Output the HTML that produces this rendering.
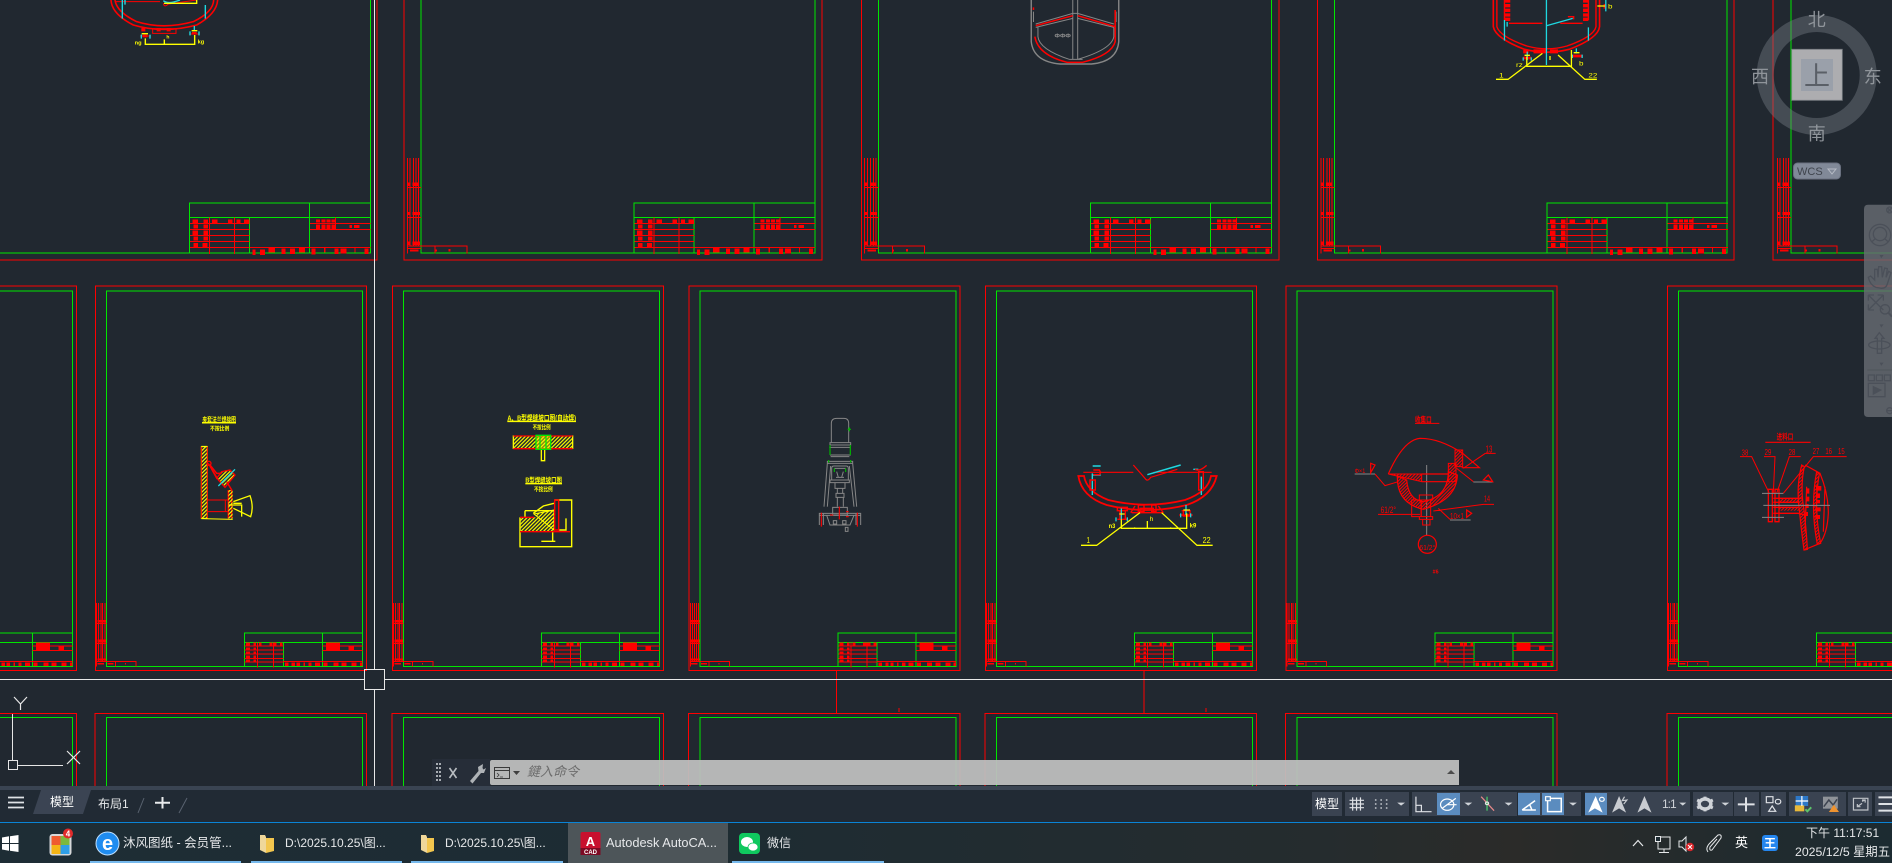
<!DOCTYPE html>
<html lang="zh"><head><meta charset="utf-8"><title>AutoCAD</title>
<style>
html,body{margin:0;padding:0;width:1892px;height:863px;overflow:hidden;background:#212830;}
body{position:relative;font-family:"Liberation Sans","Noto Sans CJK SC",sans-serif;}
svg{position:absolute;left:0;top:0;display:block;}
path,rect,line,circle,ellipse,polyline,polygon{vector-effect:non-scaling-stroke;}
.t{position:absolute;white-space:nowrap;color:#e6e8ea;font-size:12px;line-height:16px;}
.bar{position:absolute;background:#3a4351;}
.hi{position:absolute;background:#5b8cbf;}
.ul{position:absolute;top:861px;height:2px;background:#76b9ed;}
.r{stroke:#f00;fill:none}.g{stroke:#00e600;fill:none}.y{stroke:#ff0;fill:none}.c{stroke:#1fd8e0;fill:none}.w{stroke:#868686;fill:none}
.fr{fill:#f00;stroke:none}
text{font-family:"Liberation Sans","Noto Sans CJK SC",sans-serif;}
</style></head><body>

<svg width="1892" height="786" viewBox="0 0 1892 786">
<defs>
<pattern id="hy" width="8" height="8" patternUnits="userSpaceOnUse" patternTransform="rotate(45)"><rect x="0" y="0" width="3.5" height="8" fill="#ff0" style="vector-effect:none"/></pattern>
<pattern id="hr" width="7" height="7" patternUnits="userSpaceOnUse" patternTransform="rotate(45)"><rect x="0" y="0" width="3" height="7" fill="#f00" style="vector-effect:none"/></pattern>

<g id="r1t" transform="scale(.33333)" shape-rendering="crispEdges">
 <path class="g" d="M568 760V609H1112M568 652H1112M928 609V760M748 652V760"/>
 <path class="r" d="M570 670H748M570 688H748M570 706H748M570 724H748M570 742H748M628 652V762M703 652V762M930 670H1112M930 688H1112M1007 652V688M750 742H1112"/>
 <path class="fr" d="M578 658h16v14h-16zM610 658h14v14h-14zM636 658h16v14h-16zM684 658h14v14h-14zM710 658h12v14h-12zM732 658h16v14h-16zM580 673h14v12h-14zM610 673h14v12h-14zM578 692h16v14h-16zM610 692h14v14h-14zM580 710h14v12h-14zM610 710h14v12h-14zM580 729h14v13h-14zM608 729h14v13h-14zM948 658h12v10h-12zM964 658h12v10h-12zM980 658h12v10h-12zM995 658h12v10h-12zM948 674h12v13h-12zM964 674h12v13h-12zM980 674h12v13h-12zM995 674h12v13h-12zM1048 675h8v9h-8zM1062 675h16v9h-16zM757 748h10v17h-10zM780 748h15v17h-15zM805 743h20v15h-20zM845 745h12v17h-12zM870 745h15v17h-15zM897 743h18v15h-18zM935 745h12v18h-12zM972 743h5v15h-5zM1003 745h12v17h-12zM1022 745h18v15h-18zM1063 743h4v15h-4zM1093 745h12v17h-12z"/>
</g>

<g id="r1s" transform="scale(.33333)" shape-rendering="crispEdges">
 <path class="r" d="M-111.5 474V738M-103.5 474V738M-93.5 474V738M-85.5 474V738M-77.5 474V738M-111.5 563H-70M-111.5 652H-70"/>
 <path class="fr" d="M-111 548h8v10h-8zM-96 548h18v10h-18zM-111 636h8v9h-8zM-96 636h22v9h-22zM-111 724h8v11h-8zM-96 724h22v11h-22zM-103 748h25v6h-25zM-28 748h5v6h-5zM12 747h6v8h-6z"/>
 <path class="r" d="M-111.5 760V738H68V760M-28.5 738V760M-111.5 745H-70"/>
</g>

<g id="r2" transform="translate(90,610) scale(.33333)" shape-rendering="crispEdges">
 <rect class="r" x="16" y="-972" width="813" height="1153"/>
 <rect class="g" x="49" y="-957" width="768" height="1126"/>
 <path class="g" d="M463 169V69H817M463 97H817M697 69V169M580 97V169"/>
 <path class="r" d="M464 108H580M464 120H580M464 132H580M464 145H580M464 156H580M502 97V172M550 97V172M697 108H817M697 121H817M580 155H817"/>
 <path class="fr" d="M468 97h12v11h-12zM490 97h8v11h-8zM507 97h8v11h-8zM538 97h10v11h-10zM552 97h8v11h-8zM570 97h8v11h-8zM468 112h12v8h-12zM490 112h8v8h-8zM468 124h12v8h-12zM490 124h8v8h-8zM468 136h12v8h-12zM490 136h8v8h-8zM468 148h12v8h-12zM490 148h8v8h-8zM708 97h42v24h-42zM775 110h17v10h-17zM585 157h10v11h-10zM605 157h10v11h-10zM620 157h10v11h-10zM640 157h5v11h-5zM655 157h10v11h-10zM675 157h15v11h-15zM700 157h12v11h-12zM730 157h15v11h-15zM755 157h15v11h-15zM785 157h15v11h-15zM810 157h7v11h-7z"/>
 <path class="r" d="M20 -21V154M26 -21V154M33 -21V154M38 -21V154M45 -21V154M20 40H49M20 100H49M20 154H138V170M20 154V170M76 154V170"/>
 <path class="fr" d="M22 30h10v8h-10zM34 30h14v8h-14zM22 88h10v9h-10zM34 88h14v9h-14zM22 145h10v7h-10zM34 145h14v7h-14zM22 159h20v5h-20zM52 159h18v5h-18zM105 159h3v5h-3z"/>
</g>

<g id="r3" shape-rendering="crispEdges">
 <path class="r" d="M95 786V713.3H366.5V786"/>
 <path class="g" d="M106.3 786V717.3H362.3V786"/>
</g>
</defs>

<rect width="1892" height="786" fill="#212830"/>

<!-- row 1 frames -->
<g shape-rendering="crispEdges">
 <path class="r" d="M377 0V260H0"/><path class="g" d="M370.5 0V253H0"/>
 <path class="r" d="M404 0V260H822V0"/><path class="g" d="M421 0V253H815V0"/>
 <path class="r" d="M861.5 0V260H1279V0"/><path class="g" d="M878.4 0V253H1271.5V0"/>
 <path class="r" d="M1317.5 0V260H1734V0"/><path class="g" d="M1334.5 0V253H1727V0"/>
 <path class="r" d="M1773 0V260H1892"/><path class="g" d="M1791 0V253H1892"/>
</g>
<use href="#r1t"/>
<use href="#r1t" transform="translate(444.5,0)"/>
<use href="#r1t" transform="translate(901,0)"/>
<use href="#r1t" transform="translate(1357.5,0)"/>
<use href="#r1s" transform="translate(444.5,0)"/>
<use href="#r1s" transform="translate(901.9,0)"/>
<use href="#r1s" transform="translate(1358,0)"/>
<use href="#r1s" transform="translate(1814.5,0)"/>
<!-- row 2 frames -->
<use href="#r2" transform="translate(-290,0)"/>
<use href="#r2"/>
<use href="#r2" transform="translate(297,0)"/>
<use href="#r2" transform="translate(593.7,0)"/>
<use href="#r2" transform="translate(890,0)"/>
<use href="#r2" transform="translate(1190.5,0)"/>
<use href="#r2" transform="translate(1572,0)"/>
<!-- row 3 frames -->
<use href="#r3" transform="translate(-290,0)"/>
<use href="#r3"/>
<use href="#r3" transform="translate(297,0)"/>
<use href="#r3" transform="translate(593.7,0)"/>
<use href="#r3" transform="translate(890,0)"/>
<use href="#r3" transform="translate(1190.5,0)"/>
<use href="#r3" transform="translate(1572,0)"/>
<!-- between rows small marks -->
<path class="r" d="M836.5 670V713M1144 670V713M899 708v4M1206 708v4"/>

<!-- top drawing frame 1 -->
<g transform="scale(.33333)">
 <path class="r" stroke-width="1.6" d="M333 0Q335 42 400 75Q490 102 590 75Q650 42 653 0"/>
 <path class="r" stroke-width="1.6" d="M345 0Q350 36 410 65Q490 90 580 65Q640 36 641 0"/>
 <path class="r" d="M345 5H480M490 10Q492 24 505 12L590 0M458 86H528V100H458ZM420 108H452M570 102H598"/>
 <path class="fr" d="M424 84h12v10h-12zM470 84h12v10h-12zM500 84h12v10h-12zM428 104h14v8h-14zM576 96h14v8h-14z"/>
 <path class="c" stroke-width="1.4" d="M367 0V56M616 15V56M375 0V14M490 2Q505 14 540 0M424 104v12M450 104v12M570 94v12M597 94v12M583 78V90"/>
 <path class="y" stroke-width="1.4" d="M436 115V133H584V105M493 118V133M425 101H444M575 92H592M492 10H590V0"/>
 <text x="404" y="134" font-size="17" font-weight="bold" fill="#ff0">ng</text><text x="593" y="131" font-size="17" font-weight="bold" fill="#ff0">kg</text><text x="499" y="116" font-size="15" font-weight="bold" fill="#ff0">h</text>
</g>

<!-- top drawing frame 3 (grey) -->
<g transform="translate(1000,0) scale(.44643,.33333)">
 <path class="w" stroke-width="1.4" d="M70 0V125Q75 185 135 192H205Q262 185 266 125V0"/>
 <path class="w" stroke-width="1" d="M75 35V66M260 35V66M80 72L163 40H174L255 72M80 82L163 55M174 55L255 82M163 0V178M174 0V178M85 82V110Q88 148 155 178M255 82V110Q250 148 174 178M155 178H185"/>
 <path class="r" stroke-width="1.5" d="M80 77L163 47M174 47L258 80M75 22V30M258 30V125Q250 165 185 187H150Q85 165 78 110"/>
 <text x="122" y="113" font-size="15" fill="#8e8e8e" font-weight="bold">ΦΦΦ</text>
</g>

<!-- top drawing frame 4 -->
<g transform="translate(1000,0) scale(.44643,.33333)">
 <path class="r" stroke-width="1.6" d="M1105 0V80Q1110 115 1175 148Q1225 165 1275 148Q1340 115 1343 80V0"/>
 <path class="r" stroke-width="1.4" d="M1113 0V80Q1120 110 1180 138Q1225 155 1270 138Q1330 110 1335 80V0M1140 70H1215M1255 70H1305M1272 50H1285V58M1130 0V60M1318 60V0"/>
 <path class="fr" d="M1131 0h12v8h-12zM1131 12h12v10h-12zM1131 26h12v10h-12zM1131 40h12v10h-12zM1131 53h12v10h-12zM1306 0h12v8h-12zM1306 12h12v10h-12zM1306 26h12v10h-12zM1306 40h12v10h-12zM1306 53h12v10h-12zM1172 150h12v10h-12zM1195 148h30v12h-30zM1232 148h18v12h-18zM1172 170h18v8h-18zM1282 164h22v8h-22zM1352 12h6v14h-6z"/>
 <path class="c" stroke-width="1.3" d="M1224 0V195M1225 77L1283 55M1130 60V122M1318 82V122M1181 155V180M1172 172v10M1190 172v10M1291 145V160M1282 164v10M1304 164v10M1357 0V34M1136 66V80"/>
 <path class="y" stroke-width="1.3" d="M1180 170V199H1280V150M1111 238H1138L1215 160M1337 238H1310L1250 165M1175 166H1187M1285 158H1298M1338 18H1355M1232 168V180"/>
 <text x="1118" y="233" font-size="18" fill="#ff0">1</text><text x="1318" y="233" font-size="18" fill="#ff0">22</text><text x="1156" y="201" font-size="18" fill="#ff0">rz</text><text x="1297" y="197" font-size="18" fill="#ff0">b</text><text x="1362" y="25" font-size="18" fill="#ff0">b</text>
</g>

<!-- row 2 drawing 1 & 2 -->
<g transform="translate(180,400) scale(.33333)">
 <text x="67" y="66" font-size="20" font-weight="bold" fill="#ff0" textLength="101" lengthAdjust="spacingAndGlyphs">夹套法兰焊接图</text>
 <path class="y" stroke-width="1.6" d="M66 68H168"/>
 <text x="90" y="91" font-size="17" font-weight="bold" fill="#ff0" textLength="58" lengthAdjust="spacingAndGlyphs">不按比例</text>
 <rect x="64" y="140" width="18" height="215" fill="url(#hy)" stroke="#ff0"/>
 <path class="r" d="M82 140V355M64 140V355M82 300H145M82 335H145M136 300V335"/>
 <path class="y" d="M64 356L158 358M64 139H82"/>
 <path d="M85 190L110 235L125 215L150 210L165 225L135 262L115 240Z" fill="url(#hy)" stroke="#f00" stroke-width="1.3"/>
 <circle cx="87" cy="190" r="6" fill="none" stroke="#f00" stroke-width="1.3"/>
 <path class="r" stroke-width="1.5" d="M90 195L110 220L125 220M140 245L155 270V355M145 270V355"/>
 <rect x="145" y="270" width="13" height="86" fill="url(#hy)"/>
 <path class="c" stroke-width="1.3" d="M115 258L165 208"/>
 <path class="y" stroke-width="1.3" d="M160 305L210 287Q222 320 212 350L160 325M145 315H185V350M160 310H185"/>

 <text x="982" y="61" font-size="23" font-weight="bold" fill="#ff0" textLength="206" lengthAdjust="spacingAndGlyphs">A、B型焊缝坡口图(自动焊)</text>
 <path class="y" stroke-width="1.5" d="M982 64H1188"/>
 <text x="1058" y="88" font-size="18" font-weight="bold" fill="#ff0" textLength="54" lengthAdjust="spacingAndGlyphs">不按比例</text>
 <rect x="1000" y="108" width="178" height="38" fill="url(#hy)"/>
 <path class="y" stroke-width="1.3" d="M1000 106V147M1178 106V147M1084 146V182H1094V146"/>
 <path class="r" stroke-width="1.3" d="M1000 108H1178M1000 146H1178"/>
 <path stroke="#00e600" stroke-width="1.3" fill="rgba(255,255,0,.45)" d="M1068 106H1112V148H1068ZM1080 106V148M1098 106V148"/>
 <text x="1036" y="248" font-size="21" font-weight="bold" fill="#ff0" textLength="110" lengthAdjust="spacingAndGlyphs">B型焊缝坡口图</text>
 <path class="y" stroke-width="1.5" d="M1036 251H1146"/>
 <text x="1062" y="274" font-size="18" font-weight="bold" fill="#ff0" textLength="56" lengthAdjust="spacingAndGlyphs">不按比例</text>
 <rect x="1022" y="352" width="100" height="43" fill="url(#hy)"/>
 <path d="M1062 342L1122 330V390Z" fill="url(#hy)" stroke="#ff0"/>
 <path class="y" stroke-width="1.4" d="M1124 300H1175V440H1020V352M1060 340L1090 318L1122 310M1035 332V352M1035 332H1122M1084 424H1126M1118 395V424M1158 355V390H1136"/>
 <path class="r" stroke-width="1.4" d="M1020 395H1170M1124 300H1136V390H1124ZM1020 352H1062"/>
</g>

<!-- row 2 drawing 3 (grey) -->
<g transform="translate(780,400) scale(.33333)">
 <path class="w" stroke-width="1" d="M154 128V70Q154 55 170 55H192Q206 55 206 70V128M150 128H212V135H150ZM148 142H212M150 165H212M152 170H208M142 184H218V190H142ZM142 190L132 320M218 190L230 320M152 198L142 320M208 198L222 320M155 240V205Q155 198 162 198H198Q205 198 205 205V240M163 205H197M170 215L175 232M190 215L185 232M168 232H192M150 240H208V248H150ZM165 248V265H195V248M172 265V280M188 265V280M168 280H192V292H168ZM172 292V320M190 292V320M158 322H202V345H158ZM118 340H242V346H118ZM118 346V375M242 346V375M130 340V375M228 340V375M140 346L150 375H210L222 346M160 362H170V372H160ZM188 362H198V372H188ZM196 382H204V394H196Z"/>
 <path stroke="#00b400" fill="none" stroke-width="1.2" d="M150 135V165M211 135V165M146 180V188M212 180V188M163 205V216M197 205V216M203 88H213M208 82V94"/>
 <path class="r" stroke-width="1.1" d="M124 338V380M232 338V380M178 320V358M150 345H160M198 335H206M198 350H206"/>
</g>

<!-- row 2 drawing 4 -->
<g transform="translate(1040,440) scale(.33333)">
 <path class="r" stroke-width="1.2" d="M130 97H280M340 97H515M280 75L315 115Q322 127 332 112L412 88"/>
 <path class="r" stroke-width="1.8" d="M115 108H132Q140 155 205 180Q320 208 435 180Q505 155 513 108H530Q515 170 440 195Q320 225 200 195Q125 170 115 108Z"/>
 <path class="c" stroke-width="1.5" d="M322 104L422 75"/>
 <path class="c" stroke-width="1.4" d="M158 78H182M158 105H182M157 100V165M484 110V165M460 88H475"/>
 <path class="r" stroke-width="1.4" d="M160 90H178Q184 98 178 104H160M150 120H166V150H150ZM476 95H490V150H476ZM465 88Q478 96 500 76M232 202H262V212H232ZM240 212V238H256V212M232 238H262M425 212H452M430 212V228H450V212M418 225H458M275 218H370M295 195H312V215H295ZM335 195H348V215H335ZM300 205H340V218H300ZM272 218L285 198M370 218L355 198"/>
 <path class="c" stroke-width="1.3" d="M228 232V244M262 232V244M422 220V232M452 220V232M244 205V238M438 195V225"/>
 <path class="y" stroke-width="1.3" d="M244 238V265H440V220M284 262V265M322 243V265M392 262V265M430 210H450M238 222H254M123 316H170L300 218M518 316H471L365 218"/>
 <text x="206" y="264" font-size="20" font-weight="bold" fill="#ff0" textLength="20" lengthAdjust="spacingAndGlyphs">n3</text>
 <text x="449" y="263" font-size="20" font-weight="bold" fill="#ff0" textLength="20" lengthAdjust="spacingAndGlyphs">k9</text>
 <text x="329" y="243" font-size="20" fill="#ff0">h</text>
 <text x="140" y="309" font-size="24" fill="#ff0" textLength="10" lengthAdjust="spacingAndGlyphs">1</text>
 <text x="488" y="309" font-size="24" fill="#ff0" textLength="24" lengthAdjust="spacingAndGlyphs">22</text>
</g>

<!-- row 2 drawing 5 & 6 -->
<g transform="translate(1340,400) scale(.33333)">
 <text x="225" y="68" font-size="24" font-weight="bold" fill="#f00" textLength="50" lengthAdjust="spacingAndGlyphs">收集口</text>
 <path class="r" d="M225 70H298"/>
 <path class="w" d="M260 195V405"/>
 <path class="r" stroke-width="1.2" d="M145 222Q190 120 240 115Q300 115 368 160L418 203H365M245 222H325M245 245H325"/>
 <path d="M145 222L245 222V245Z" fill="url(#hr)" stroke="#f00" stroke-width="1"/>
 <path d="M172 228Q170 310 250 328Q350 300 352 225L325 215Q325 290 250 305Q205 300 200 240Z" fill="url(#hr)" stroke="#f00" stroke-width="1.2"/>
 <rect x="345" y="150" width="23" height="50" fill="url(#hr)" stroke="#f00"/>
 <rect x="325" y="190" width="23" height="55" fill="url(#hr)" stroke="#f00"/>
 <path class="r" d="M238 285H278V300H238ZM244 300H272V350H244ZM238 350H278V358H238ZM248 358H270V375H248ZM215 300H243V350H215ZM105 222L135 257L175 245M114 343H240M280 333L430 313H462M436 160H467M436 160L370 205M330 358L295 325M350 205L400 245"/>
 <path class="w" d="M44 222H105M330 360H392M400 246H458"/>
 <circle cx="262" cy="433" r="27" class="r" stroke-width="1.2"/>
 <text x="44" y="219" font-size="20" fill="#f00" textLength="32" lengthAdjust="spacingAndGlyphs">Φ×1</text>
 <path class="r" stroke-width="1.2" d="M92 190L105 195L92 218ZM380 330L395 340L380 352ZM430 240L445 225L458 245Z"/>
 <text x="122" y="339" font-size="28" fill="#f00" textLength="46" lengthAdjust="spacingAndGlyphs">61/2°</text>
 <text x="437" y="157" font-size="30" fill="#f00" textLength="20" lengthAdjust="spacingAndGlyphs">13</text>
 <text x="432" y="305" font-size="26" fill="#f00" textLength="18" lengthAdjust="spacingAndGlyphs">14</text>
 <text x="330" y="357" font-size="24" fill="#f00" textLength="42" lengthAdjust="spacingAndGlyphs">10×1</text>
 <text x="238" y="450" font-size="22" fill="#f00" textLength="48" lengthAdjust="spacingAndGlyphs">61/2°</text>
 <text x="278" y="521" font-size="16" font-weight="bold" fill="#f00">#6</text>

 <text x="1310" y="119" font-size="24" font-weight="bold" fill="#f00" textLength="50" lengthAdjust="spacingAndGlyphs">进料口</text>
 <path class="r" stroke-width="1.2" d="M1276 127H1412"/>
 <text x="1205" y="167" font-size="26" fill="#f00" textLength="20" lengthAdjust="spacingAndGlyphs">38</text><text x="1274" y="165" font-size="26" fill="#f00" textLength="20" lengthAdjust="spacingAndGlyphs">29</text><text x="1346" y="165" font-size="26" fill="#f00" textLength="20" lengthAdjust="spacingAndGlyphs">28</text><text x="1418" y="162" font-size="26" fill="#f00" textLength="20" lengthAdjust="spacingAndGlyphs">27</text><text x="1456" y="162" font-size="26" fill="#f00" textLength="20" lengthAdjust="spacingAndGlyphs">16</text><text x="1494" y="162" font-size="26" fill="#f00" textLength="20" lengthAdjust="spacingAndGlyphs">15</text>
 <path class="r" d="M1200 170H1235L1288 280M1272 170H1305L1300 280M1382 170H1348L1310 280M1520 170H1420L1330 280"/>
 <path class="r" stroke-width="1.3" d="M1285 268H1297V365H1285ZM1305 268H1317V365H1305ZM1300 295H1385M1300 307H1375M1300 340H1375L1395 345M1300 322H1375"/>
 <rect x="1318" y="295" width="60" height="12" fill="url(#hr)"/><rect x="1318" y="322" width="60" height="10" fill="url(#hr)"/>
 <path d="M1385 195L1393 200Q1380 260 1392 330Q1400 400 1402 448L1392 450Q1385 400 1378 330Q1368 260 1385 195Z" fill="url(#hr)" stroke="#f00" stroke-width="1.2"/>
 <path d="M1430 215L1438 222Q1420 320 1442 430L1432 433Q1410 320 1430 215Z" fill="url(#hr)" stroke="#f00" stroke-width="1.2"/>
 <path class="r" stroke-width="1.2" d="M1395 195L1440 220Q1465 280 1465 340Q1462 400 1440 430L1392 450M1400 260L1395 395M1455 260L1450 395"/>
 <path class="fr" d="M1398 265h10v16h-10zM1398 290h10v14h-10zM1396 312h10v12h-10zM1396 336h8v12h-8zM1428 258h16v14h-16zM1428 280h12v14h-12zM1428 300h12v10h-10zM1426 322h16v12h-16zM1426 345h14v12h-14z"/>
 <path class="w" d="M1266 280H1330M1266 352H1332M1270 316H1470"/>
</g>

<!-- crosshair -->
<g stroke="#e8e8e8" stroke-width="1.3" fill="none" shape-rendering="crispEdges">
 <path d="M374.5 0V669M374.5 690V786M0 679.5H364M385 679.5H1892"/>
 <rect x="364.5" y="669.5" width="20" height="20"/>
</g>

<!-- UCS -->
<g stroke="#e6e6e6" stroke-width="1.2" fill="none">
 <path d="M12.5 714V760M17.5 765.5H63" shape-rendering="crispEdges"/>
 <rect x="8.5" y="760.5" width="9" height="9" shape-rendering="crispEdges"/>
 <path d="M67 751L80 764M80 751L67 764M14 697L20.5 704L27 697M20.5 704V710"/>
</g>
</svg>

<!-- command line -->
<div style="position:absolute;left:432px;top:759px;width:58px;height:27px;background:#262d38;"></div>
<div style="position:absolute;left:490px;top:760px;width:969px;height:25px;background:rgba(190,190,190,.95);border-radius:2px 0 0 2px;"></div>

<!-- status bar -->
<div style="position:absolute;left:0;top:786px;width:1892px;height:4px;background:#3a4452;"></div>
<div style="position:absolute;left:0;top:790px;width:1892px;height:32px;background:#212a34;"></div>
<div class="bar" style="left:1312px;top:792px;width:30px;height:24px;"></div>
<div class="bar" style="left:1345px;top:792px;width:64px;height:24px;"></div>
<div class="bar" style="left:1412px;top:792px;width:105px;height:24px;"></div>
<div class="bar" style="left:1518px;top:792px;width:63px;height:24px;"></div>
<div class="bar" style="left:1585px;top:792px;width:105px;height:24px;"></div>
<div class="bar" style="left:1693px;top:792px;width:40px;height:24px;"></div>
<div class="bar" style="left:1734px;top:792px;width:25px;height:24px;"></div>
<div class="bar" style="left:1761px;top:792px;width:25px;height:24px;"></div>
<div class="bar" style="left:1789px;top:792px;width:57px;height:24px;"></div>
<div class="bar" style="left:1848px;top:792px;width:24px;height:24px;"></div>
<div class="bar" style="left:1875px;top:792px;width:17px;height:24px;"></div>
<div class="hi" style="left:1437px;top:793px;width:23px;height:22px;"></div>
<div class="hi" style="left:1518px;top:793px;width:22px;height:22px;"></div>
<div class="hi" style="left:1542px;top:793px;width:22px;height:22px;"></div>
<div class="hi" style="left:1585px;top:793px;width:22px;height:22px;"></div>

<!-- taskbar -->
<div style="position:absolute;left:0;top:822px;width:1892px;height:41px;background:linear-gradient(90deg,#1e2d35 0%,#1d2c33 35%,#252c2e 70%,#2b2b29 80%,#1c2b31 100%);"></div>
<div style="position:absolute;left:0;top:822px;width:1892px;height:1px;background:#0a84d6;"></div>
<div style="position:absolute;left:568px;top:823px;width:160px;height:40px;background:#4d5559;"></div>
<div class="ul" style="left:90px;width:151px;"></div>
<div class="ul" style="left:251px;width:151px;"></div>
<div class="ul" style="left:411px;width:152px;"></div>
<div class="ul" style="left:732px;width:152px;"></div>

<!-- compass + icons -->
<svg width="1892" height="863" viewBox="0 0 1892 863" style="pointer-events:none">
 <circle cx="1816.7" cy="75" r="51.5" fill="none" stroke="rgba(120,126,135,.42)" stroke-width="17"/>
 <rect x="1791.7" y="49.3" width="50.6" height="51" fill="rgba(184,184,186,.93)" stroke="#777b80" stroke-width=".8"/>
 <rect x="1801" y="59" width="32" height="32" fill="#9aa0aa"/>
 <text x="1817" y="85" font-size="26" text-anchor="middle" fill="#5a5f67">上</text>
 <text x="1816.7" y="26" font-size="18" text-anchor="middle" fill="#8f949a">北</text>
 <text x="1816.7" y="140" font-size="18" text-anchor="middle" fill="#8f949a">南</text>
 <text x="1760" y="83" font-size="18" text-anchor="middle" fill="#8f949a">西</text>
 <text x="1872.7" y="83" font-size="18" text-anchor="middle" fill="#8f949a">东</text>
 <rect x="1793.5" y="163" width="47" height="16" rx="4" fill="#818998" stroke="#6a7180"/>
 <text x="1797" y="175" font-size="11" fill="#3f444d">WCS</text>
 <path d="M1828 169H1836L1832 174Z" fill="none" stroke="#b7bcc6" stroke-width="1"/>

 <!-- nav bar -->
 <path d="M1868 204.7H1892V417H1868Q1864 417 1864 413V209Q1864 204.7 1868 204.7Z" fill="rgba(102,107,115,.82)"/>
 <g transform="translate(1780,190) scale(.33333)" fill="none" stroke="#4b5059" stroke-width="1.3">
  <circle cx="300" cy="135" r="32"/><circle cx="300" cy="132" r="20"/>
  <path d="M276 155L285 147M324 155L315 147"/>
  <path d="M302 197l5 0l-3 4zM302 405l5 0l-3 4zM302 520l5 0l-3 4z" fill="#4b5059"/>
  <path d="M288 292Q270 285 265 262L272 258L284 270L284 238L292 238L294 262L296 230L305 230L307 262L314 234L322 236L318 262L326 244L333 248L322 282Q318 295 305 295Z"/>
  <path d="M265 315H282M265 315V332M265 315L310 360M310 315H293M310 315V332M310 315L265 360M265 360V343M265 360H282"/>
  <circle cx="315" cy="358" r="14"/><path d="M325 368L336 380" stroke-width="2"/>
  <path d="M298 428L285 445H292V490H305V445H312Z"/>
  <ellipse cx="298" cy="465" rx="32" ry="12"/>
  <path d="M262 540H336" stroke-width=".8"/>
  <rect x="265" y="555" width="18" height="17"/><rect x="289" y="555" width="18" height="17"/><rect x="313" y="555" width="18" height="17"/>
  <rect x="265" y="580" width="50" height="40"/>
  <path d="M280 590L302 600L280 612Z" fill="#4b5059"/>
  <circle cx="329" cy="60" r="9"/><path d="M323 54L335 66M335 54L323 66"/>
  <circle cx="329" cy="662" r="9"/><path d="M321 662H337"/>
 </g>

 <!-- command line icons -->
 <g fill="#a8adb3">
  <rect x="436" y="763" width="2" height="2"/><rect x="439" y="763" width="2" height="2"/><rect x="436" y="767" width="2" height="2"/><rect x="439" y="767" width="2" height="2"/><rect x="436" y="771" width="2" height="2"/><rect x="439" y="771" width="2" height="2"/><rect x="436" y="775" width="2" height="2"/><rect x="439" y="775" width="2" height="2"/><rect x="436" y="779" width="2" height="2"/><rect x="439" y="779" width="2" height="2"/>
 </g>
 <path d="M449.5 768L456.5 778M456.5 768L449.5 778" stroke="#b9bdc2" stroke-width="1.6"/>
 <path d="M483 764L478 767L478.5 771L470 781L472.5 783.5L481 773L484 773L486 768L483.5 769.5L482.5 768Z" fill="#aeb2b6"/>
 <rect x="494.5" y="767.5" width="15" height="11" fill="none" stroke="#3a3a3a" stroke-width="1"/>
 <path d="M494 770.5H510" stroke="#3a3a3a"/><path d="M497 773L499 775L497 777M500 777H503" stroke="#3a3a3a" fill="none" stroke-width=".8"/>
 <path d="M513 771H520L516.5 775Z" fill="#3f3f3f"/>
 <path d="M1447 774H1455L1451 770Z" fill="#4c4c4c"/>

 <!-- status left -->
 <path d="M8 797.5H24M8 802.5H24M8 807.5H24" stroke="#dfe2e6" stroke-width="1.8"/>
 <path d="M41 790H91L83 814H33Z" fill="#3b4453"/>
 <path d="M144 798L138 813M187 798L179 813" stroke="#596270" stroke-width="1"/>
 <path d="M162.5 797V808.5M155 802.7H170" stroke="#e8eaec" stroke-width="2"/>

 <!-- status right icons (zoom coords) -->
 <g transform="translate(1280,780) scale(.39063,.33333)" fill="none" stroke="#dfe2e6" stroke-width="1.2">
  <path d="M186 52V92M196 52V92M206 52V92M178 61H215M178 72H215M178 83H215"/>
  <path d="M243 58h4v4h-4zM257 58h4v4h-4zM271 58h4v4h-4zM243 70h4v4h-4zM257 70h4v4h-4zM271 70h4v4h-4zM243 82h4v4h-4zM257 82h4v4h-4zM271 82h4v4h-4z" fill="#dfe2e6" stroke="none"/>
  <g fill="#cfd3d8" stroke="none">
   <path d="M300 68H320L310 77Z"/><path d="M472 68H492L482 77Z"/><path d="M575 68H595L585 77Z"/><path d="M740 68H760L750 77Z"/><path d="M1022 68H1040L1031 77Z"/><path d="M1130 68H1150L1140 77Z"/>
  </g>
  <path d="M348 50V95H388M348 76H362V95"/>
  <circle cx="428" cy="74" r="17" stroke="#fff"/><path d="M415 85L450 55M428 74H452" stroke="#fff"/>
  <path d="M515 50L548 92" stroke="#e88a8a"/><path d="M530 50V92" stroke="#4bd36b"/><circle cx="530" cy="70" r="4" stroke="#e6e6e6"/>
  <path d="M620 90L653 62M620 90H655M640 76L645 90" stroke="#fff" stroke-width="1.5"/>
  <rect x="685" y="55" width="35" height="40" stroke="#fff" stroke-width="1.5"/><rect x="680" y="50" width="12" height="12" fill="#5b8cbf" stroke="#fff"/>
  <path d="M808 48L789 98L806 85L826 98Z" fill="#fff" stroke="none"/><circle cx="824" cy="58" r="6" stroke="#fff"/>
  <path d="M868 48L850 98L868 85L886 98Z" fill="#c9ccd1" stroke="none"/><path d="M882 50L876 62L888 60L880 72" stroke="#c9ccd1"/>
  <path d="M933 48L915 98L933 85L951 98Z" fill="#c9ccd1" stroke="none"/>
  <circle cx="1088" cy="72" r="15" stroke="#cfd3d8" stroke-width="3.5"/>
  <path d="M1088 50V60M1088 84V94M1068 60L1078 66M1098 78L1108 84M1108 60L1098 66M1078 78L1068 84" stroke="#cfd3d8" stroke-width="3"/>
  <path d="M1193 52V94M1172 73H1215" stroke-width="2"/>
  <rect x="1245" y="50" width="17" height="18"/><circle cx="1275" cy="65" r="7"/><path d="M1260 78L1251 94H1269Z"/>
  <rect x="1320" y="48" width="32" height="30" fill="#2d78c8" stroke="none"/><rect x="1318" y="76" width="24" height="18" fill="#e8b93a" stroke="none"/>
  <path d="M1320 63H1352M1336 48V78" stroke="#fff"/><path d="M1345 88L1350 94L1360 82" stroke="#5dc26a" stroke-width="2"/>
  <rect x="1390" y="50" width="38" height="36" fill="#8f9399" stroke="none"/><path d="M1392 80L1405 60L1416 75L1426 58" stroke="#3d4450" stroke-width="1.5"/>
  <path d="M1418 74L1405 96H1431Z" fill="#ee9330" stroke="none"/>
  <rect x="1468" y="55" width="37" height="35" stroke="#bfc3c8"/><path d="M1478 80L1490 70M1478 72V80H1486M1490 64L1498 60M1490 60H1498V68" stroke="#bfc3c8"/>
  <path d="M1532 52H1568M1532 72H1568M1532 92H1568" stroke-width="2"/>
 </g>

 <!-- taskbar icons -->
 <g fill="#fff"><path d="M2 837.5L9 836.3V843H2ZM10 836.2L18.5 835V843H10ZM2 844H9V850.7L2 849.5ZM10 844H18.5V852L10 850.8Z"/></g>

 <g>
  <rect x="49.5" y="834" width="22" height="21.5" rx="3" fill="#d6d8da"/>
  <rect x="51.5" y="836" width="9" height="9" fill="#ef5b30"/><rect x="60.5" y="836" width="9" height="9" fill="#7cb93f"/>
  <rect x="51.5" y="845" width="9" height="9" fill="#f5b516"/><rect x="60.5" y="845" width="9" height="9" fill="#2f9fe8"/>
  <circle cx="68" cy="833.5" r="5" fill="#e02b2b"/><text x="68" y="836.5" font-size="8" text-anchor="middle" fill="#fff" font-weight="bold">4</text>
 </g>

 <circle cx="107.5" cy="843.5" r="11.5" fill="#1f8cf0"/><circle cx="107.5" cy="843.5" r="11.5" fill="none" stroke="#bfe0ff" stroke-width="1"/>
 <text x="107.5" y="850" font-size="20" font-weight="bold" text-anchor="middle" fill="#fff">e</text>

 <path d="M260 835H265L266 837L266 853L260 850Z" fill="#efd79a"/><path d="M266 838H274V851L266 853Z" fill="#f3c64e"/>
 <path d="M421 835H426L427 837L427 853L421 850Z" fill="#efd79a"/><path d="M427 838H434V851L427 853Z" fill="#f3c64e"/>

 <rect x="580.5" y="832" width="20" height="23" rx="2" fill="#c8102e"/><rect x="580.5" y="848" width="20" height="7" fill="#7c0a23"/>
 <text x="590.5" y="846" font-size="13" font-weight="bold" text-anchor="middle" fill="#fff">A</text>
 <text x="590.5" y="854" font-size="6" font-weight="bold" text-anchor="middle" fill="#fff">CAD</text>

 <rect x="739" y="833" width="21" height="21" rx="4" fill="#0fc85e"/>
 <ellipse cx="747" cy="842" rx="6" ry="5" fill="#fff"/><ellipse cx="753" cy="847" rx="5" ry="4" fill="#fff" stroke="#0fc85e" stroke-width=".7"/>

 <!-- tray -->
 <path d="M1633 846L1638 840.5L1643 846" fill="none" stroke="#e6e8ea" stroke-width="1.2"/>
 <g fill="none" stroke="#e6e8ea" stroke-width="1">
  <path d="M1658 837H1670V849H1658ZM1664 849V852M1659 852.5H1669"/><rect x="1655.5" y="836.5" width="5" height="5" fill="#1e2c33"/>
  <path d="M1679 841H1682L1686 837V851L1682 847H1679Z"/>
 </g>
 <circle cx="1690" cy="847" r="4.2" fill="#d9252a"/><path d="M1688 845L1692 849M1692 845L1688 849" stroke="#fff" stroke-width="1"/>
 <path d="M1708 852Q1705 848 1710 843L1718 835Q1722 834 1721 838L1712 850Q1709 851 1710 847L1717 839" fill="none" stroke="#e6e8ea" stroke-width="1"/>
 <rect x="1762" y="835" width="16" height="16" rx="3" fill="#2486ef"/>
 <text x="1770" y="847.5" font-size="12" font-weight="bold" text-anchor="middle" fill="#fff">王</text>
</svg>

<!-- text on top -->
<div class="t" style="left:527px;top:763px;font-size:13px;font-style:italic;color:#6c6c6c;line-height:18px;">鍵入命令</div>
<div class="t" style="left:50px;top:794px;color:#fff;">模型</div>
<div class="t" style="left:98px;top:796px;">布局1</div>
<div class="t" style="left:1315px;top:796px;color:#fff;">模型</div>
<div class="t" style="left:1662px;top:796px;color:#cfd3d8;letter-spacing:-1px;">1:1</div>
<div class="t" style="left:123px;top:835px;font-size:12.5px;">沐风图纸 - 会员管...</div>
<div class="t" style="left:285px;top:835px;">D:\2025.10.25\图...</div>
<div class="t" style="left:445px;top:835px;">D:\2025.10.25\图...</div>
<div class="t" style="left:606px;top:835px;font-size:12.8px;">Autodesk AutoCA...</div>
<div class="t" style="left:767px;top:835px;">微信</div>
<div class="t" style="left:1735px;top:835px;font-size:13px;color:#fff;">英</div>
<div class="t" style="left:1806px;top:825px;">下午 11:17:51</div>
<div class="t" style="left:1795px;top:844px;font-size:12.3px;">2025/12/5 星期五</div>
</body></html>
